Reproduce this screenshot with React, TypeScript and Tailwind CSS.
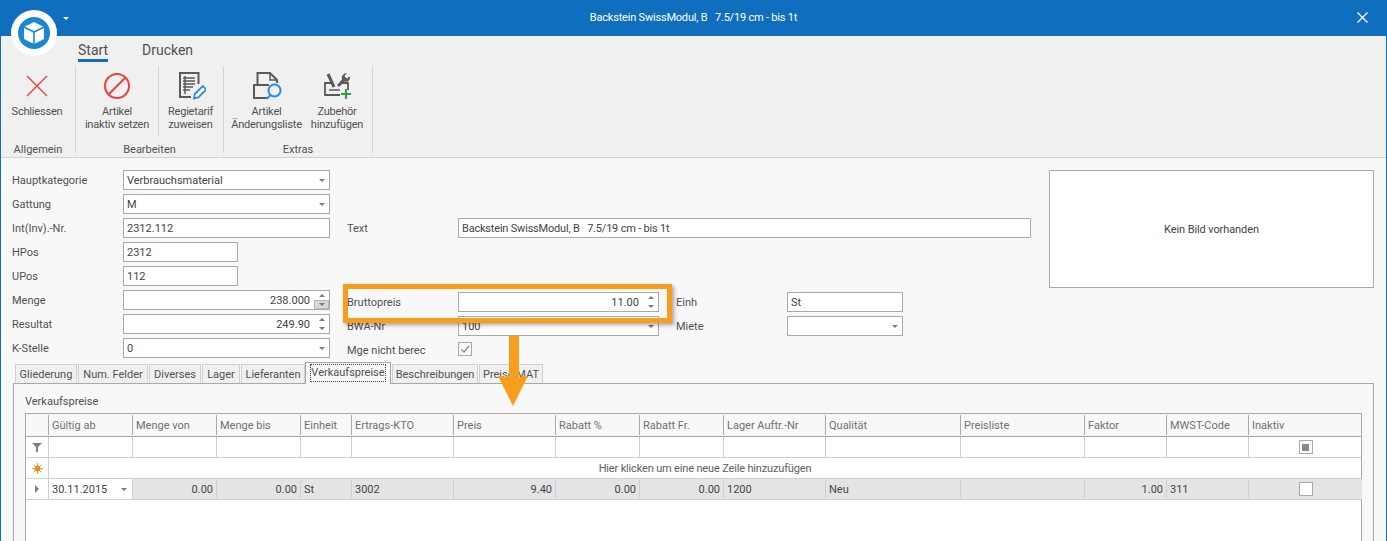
const font = { fontFamily: 'Roboto, "Liberation Sans", Arial, sans-serif' }

function Caret({ className }: { className?: string }) {
  return <div className={`ml-auto h-0 w-0 border-x-[3px] border-t-[3px] border-x-transparent border-t-[#7a7a7a] ${className ?? 'mr-[4px]'}`} />
}

function Spinner({ active }: { active?: boolean }) {
  return (
    <div className="ml-[4px] flex h-[18px] w-[15px] flex-col items-center">
      <div className="flex h-[9px] w-full items-center justify-center">
        <div className="h-0 w-0 border-x-[3px] border-b-[3px] border-x-transparent border-b-[#7a7a7a]" />
      </div>
      <div className={`flex h-[9px] w-full items-center justify-center ${active ? 'border border-[#b8b8b8] bg-[#d8d8d8]' : ''}`}>
        <div className="h-0 w-0 border-x-[3px] border-t-[3px] border-x-transparent border-t-[#7a7a7a]" />
      </div>
    </div>
  )
}

function Field({ value, kind, active, className }: { value?: string; kind?: 'combo' | 'spin'; active?: boolean; className?: string }) {
  return (
    <div className={`flex h-5 items-center border border-[#a9a9a9] bg-white pl-[3px] text-[11px] text-[#444] ${className ?? ''}`}>
      <span className={`mt-[2px] ${kind === 'spin' ? 'ml-auto' : ''}`}>{value}</span>
      {kind === 'combo' && <Caret />}
      {kind === 'spin' && <Spinner active={active} />}
    </div>
  )
}

function Label({ children, className }: { children: string; className?: string }) {
  return <div className={`flex h-5 items-center pt-[2px] text-[11px] text-[#505050] ${className ?? ''}`}>{children}</div>
}

function RibbonButton({ icon, lines, width }: { icon: React.ReactNode; lines: string[]; width: string }) {
  return (
    <div className={`flex flex-col items-center ${width}`}>
      <div className="mt-[5px] flex h-[30px] w-[30px] items-center justify-center">{icon}</div>
      <div className="mt-[4px] text-center text-[11px] leading-[13px] tracking-[-0.2px] whitespace-nowrap text-[#505050]">
        {lines.map(l => <div key={l}>{l}</div>)}
      </div>
    </div>
  )
}

function RibbonGroup({ title, width, children }: { title: string; width: string; children: React.ReactNode }) {
  return (
    <div className={`flex h-[87px] shrink-0 flex-col border-r border-[#d4d4d4] ${width}`}>
      <div className="flex h-[72px] shrink-0">{children}</div>
      <div className="mt-[5px] text-center text-[11px] leading-[13px] text-[#505050]">{title}</div>
    </div>
  )
}

const tabs = [
  { title: 'Gliederung', width: 'w-[62px]' },
  { title: 'Num. Felder', width: 'w-[70px]' },
  { title: 'Diverses', width: 'w-[52px]' },
  { title: 'Lager', width: 'w-[38px]' },
  { title: 'Lieferanten', width: 'w-[64px]' },
]

const columns = [
  { title: 'Gültig ab', value: '30.11.2015' },
  { title: 'Menge von', value: '0.00', right: true },
  { title: 'Menge bis', value: '0.00', right: true },
  { title: 'Einheit', value: 'St' },
  { title: 'Ertrags-KTO', value: '3002' },
  { title: 'Preis', value: '9.40', right: true },
  { title: 'Rabatt %', value: '0.00', right: true },
  { title: 'Rabatt Fr.', value: '0.00', right: true },
  { title: 'Lager Auftr.-Nr', value: '1200' },
  { title: 'Qualität', value: 'Neu' },
  { title: 'Preisliste', value: '' },
  { title: 'Faktor', value: '1.00', right: true },
  { title: 'MWST-Code', value: '311' },
  { title: 'Inaktiv', value: '' },
]

const gridCols = 'grid grid-cols-[22px_84px_84px_84px_51px_102px_102px_84px_84px_102px_135px_124px_82px_82px_114px]'

export default function App() {
  return (
    <div className="relative h-[541px] w-[1387px] overflow-hidden border-x border-[#106ebe] bg-[#f8f8f8]" style={font}>
      {/* title bar */}
      <div className="flex h-9 items-center justify-center bg-[#106ebe] text-[11px] text-white">
        <span className="tracking-[-0.2px] whitespace-pre">Backstein SwissModul, B   7.5/19 cm - bis 1t</span>
      </div>
      <svg className="absolute top-[12px] right-[18px]" width="11" height="11" viewBox="0 0 11 11">
        <path d="M.5.5l10 10M10.5.5l-10 10" stroke="#fff" strokeWidth="1.2" />
      </svg>

      {/* round app button */}
      <div className="absolute top-[10px] left-[10px] flex h-[46px] w-[46px] items-center justify-center rounded-full bg-white">
        <svg width="32" height="32" viewBox="0 0 32 32">
          <circle cx="16" cy="16" r="16" fill="#1b87d3" />
          <path d="M16 5l10 5v12l-10 5-10-5V10z" fill="#fff" />
          <path d="M6 10l10 5 10-5M16 15v12" fill="none" stroke="#1b87d3" strokeWidth="1.600" />
        </svg>
      </div>
      <div className="absolute top-[17px] left-[62px] h-0 w-0 border-x-[3px] border-t-[3px] border-x-transparent border-t-white" />

      {/* ribbon */}
      <div className="h-[122px] border-b border-[#d2d2d2] bg-[#f0f0f0]">
        <div className="flex h-[26px] items-end pl-[77px] text-[14px] text-[#505050]">
          <div className="w-[30px] border-b-[3px] border-[#106ebe] pb-[1px] text-center leading-[16px]">Start</div>
          <div className="ml-[34px] pb-[4px] leading-[16px]">Drucken</div>
        </div>
        <div className="mt-[4px] flex">
          <RibbonGroup title="Allgemein" width="w-[75px]">
            <RibbonButton width="w-[72px]" lines={['Schliessen']} icon={
              <svg width="22" height="22" viewBox="0 0 22 22"><path d="M1 1l20 20M21 1L1 21" stroke="#e8403f" strokeWidth="1.4" /></svg>
            } />
          </RibbonGroup>
          <RibbonGroup title="Bearbeiten" width="w-[148px]">
            <div className="flex h-[70px] w-[83px] justify-center border-r border-[#d4d4d4]">
              <RibbonButton width="w-[82px]" lines={['Artikel', 'inaktiv setzen']} icon={
                <svg width="28" height="28" viewBox="0 0 28 28">
                  <circle cx="14" cy="14" r="12" fill="none" stroke="#e8403f" strokeWidth="2" />
                  <path d="M22.500 5.500L5.500 22.500" stroke="#e8403f" strokeWidth="2" />
                </svg>
              } />
            </div>
            <RibbonButton width="w-[63px]" lines={['Regietarif', 'zuweisen']} icon={
              <svg width="30" height="30" viewBox="0 0 30 30">
                <path d="M22.500 13V2H4v24h11" fill="none" stroke="#5a5a5a" strokeWidth="2" />
                <path d="M9 5v18" stroke="#5a5a5a" strokeWidth="1.500" />
                <path d="M7 7h12M7 10h12M7 13h12M7 16h10M7 19h7" stroke="#5a5a5a" strokeWidth="1.300" />
                <path d="M18 27.500l.8-4.500 8-8 3.500 3.500-8 8z" fill="#fff" stroke="#2b8fd6" strokeWidth="1.800" />
              </svg>
            } />
          </RibbonGroup>
          <RibbonGroup title="Extras" width="w-[149px]">
            <RibbonButton width="w-[85px]" lines={['Artikel', 'Änderungsliste']} icon={
              <svg width="30" height="30" viewBox="0 0 30 30">
                <path d="M5.500 13V2H18l7 7v3" fill="none" stroke="#5a5a5a" strokeWidth="2" />
                <path d="M18 2v7h7" fill="none" stroke="#5a5a5a" strokeWidth="1.500" />
                <path d="M15 27H2V14h15" fill="none" stroke="#5a5a5a" strokeWidth="2" />
                <circle cx="22.500" cy="19.500" r="6" fill="#f0f0f0" stroke="#2b8fd6" strokeWidth="2" />
                <path d="M18.500 24l-4 4" stroke="#2b8fd6" strokeWidth="2" />
              </svg>
            } />
            <RibbonButton width="w-[56px]" lines={['Zubehör', 'hinzufügen']} icon={
              <svg width="30" height="30" viewBox="0 0 30 30">
                <path d="M6 3l6 13" fill="none" stroke="#5a5a5a" strokeWidth="3" />
                <path d="M25 2l-2.500 3 2 2.500 3.500-2c.5 4-2.500 6-5.500 5L17 16l-2-2 5-5.500c-1-3.500 1.500-6.500 5-6.500z" fill="#5a5a5a" />
                <path d="M3 11v13h15M3 12h6M19 12h7v7" fill="none" stroke="#5a5a5a" strokeWidth="1.800" />
                <path d="M7 19h11" stroke="#5a5a5a" strokeWidth="1.500" />
                <path d="M24 18v10M19 23h10" stroke="#2f9e44" strokeWidth="2.200" />
              </svg>
            } />
          </RibbonGroup>
        </div>
      </div>

      {/* form */}
      <div className="mt-[12px] grid grid-cols-[111px_207px_17px_111px_201px_17px_111px_116px_128px_18px_325px] grid-rows-[repeat(8,20px)] gap-y-1 pl-[11px]">
        <Label className="col-start-1 row-start-1">Hauptkategorie</Label>
        <Field className="col-start-2 row-start-1" value="Verbrauchsmaterial" kind="combo" />
        <Label className="col-start-1 row-start-2">Gattung</Label>
        <Field className="col-start-2 row-start-2" value="M" kind="combo" />
        <Label className="col-start-1 row-start-3">Int(Inv).-Nr.</Label>
        <Field className="col-start-2 row-start-3" value="2312.112" />
        <Label className="col-start-4 row-start-3">Text</Label>
        <Field className="col-span-5 col-start-5 row-start-3 tracking-[-0.2px] whitespace-pre" value="Backstein SwissModul, B   7.5/19 cm - bis 1t" />
        <Label className="col-start-1 row-start-4">HPos</Label>
        <Field className="col-start-2 row-start-4 w-[115px]" value="2312" />
        <Label className="col-start-1 row-start-5">UPos</Label>
        <Field className="col-start-2 row-start-5 w-[115px]" value="112" />
        <Label className="col-start-1 row-start-6">Menge</Label>
        <Field className="col-start-2 row-start-6" value="238.000" kind="spin" active />
        <Label className="col-start-4 row-start-6 mt-[2px]">Bruttopreis</Label>
        <Field className="col-start-5 row-start-6 mt-[2px]" value="11.00" kind="spin" />
        <Label className="col-start-7 row-start-6 mt-[2px]">Einh</Label>
        <Field className="col-start-8 row-start-6 mt-[2px]" value="St" />
        <Label className="col-start-1 row-start-7">Resultat</Label>
        <Field className="col-start-2 row-start-7" value="249.90" kind="spin" />
        <Label className="col-start-4 row-start-7 mt-[2px]">BWA-Nr</Label>
        <Field className="col-start-5 row-start-7 mt-[2px]" value="100" kind="combo" />
        <Label className="col-start-7 row-start-7 mt-[2px]">Miete</Label>
        <Field className="col-start-8 row-start-7 mt-[2px]" kind="combo" />
        <Label className="col-start-1 row-start-8">K-Stelle</Label>
        <Field className="col-start-2 row-start-8" value="0" kind="combo" />
        <Label className="col-start-4 row-start-8 mt-[2px]">Mge nicht berec</Label>
        <div className="col-start-5 row-start-8 mt-[2px] flex h-[14px] w-[14px] items-center justify-center self-center border border-[#a9a9a9]">
          <svg width="10" height="10" viewBox="0 0 10 10"><path d="M1.500 5.500l2.500 2.500 5-6" fill="none" stroke="#8a8a8a" strokeWidth="1.200" /></svg>
        </div>
        <div className="col-start-11 row-span-5 row-start-1 flex h-[118px] items-center justify-center border border-[#a9a9a9] bg-white pt-[2px] text-[11px] tracking-[-0.1px] text-[#444]">
          Kein Bild vorhanden
        </div>
      </div>

      {/* tabs */}
      <div className="relative z-10 mt-[4px] flex h-[21px] items-end gap-px pl-[14px] text-[11px] text-[#505050]">
        {tabs.map(t => (
          <div key={t.title} className={`flex h-[19px] items-center justify-center border border-b-0 border-[#d0d0d0] bg-[#f0f0f0] pt-[2px] ${t.width}`}>{t.title}</div>
        ))}
        <div className="-mb-px -ml-px flex h-[22px] w-[86px] items-center justify-center border border-b-0 border-[#a9a9a9] bg-[#f8f8f8] pb-[1px]">
          <span className="outline-1 outline-[#444] outline-dotted">Verkaufspreise</span>
        </div>
        <div className="flex h-[19px] w-[86px] items-center justify-center border border-b-0 border-[#d0d0d0] bg-[#f0f0f0] pt-[2px]">Beschreibungen</div>
        <div className="flex h-[19px] w-[64px] items-center justify-center border border-b-0 border-[#d0d0d0] bg-[#f0f0f0] pt-[2px]">Preise MAT</div>
      </div>
      <div className="ml-[12px] h-[200px] w-[1361px] border border-[#a9a9a9] px-[11px]">
        <div className="h-[29px] pt-[11px] text-[11px] leading-[13px] text-[#505050]">Verkaufspreise</div>
        <div className="h-[200px] border border-[#a9a9a9] bg-white text-[11px] text-[#444]">
          {/* header */}
          <div className={`${gridCols} h-[23px] border-b border-[#a9a9a9] bg-[#f8f8f8] text-[#707070]`}>
            <div />
            {columns.map(c => (
              <div key={c.title} className="my-[1px] flex items-center border-l border-[#a9a9a9] pt-[2px] pl-[3px]">{c.title}</div>
            ))}
          </div>
          {/* filter row */}
          <div className={`${gridCols} h-[21px] border-b border-[#d0d0d0]`}>
            <div className="flex items-center justify-center">
              <svg width="10" height="9" viewBox="0 0 10 9"><path d="M0 0h10L6 4v5H4V4z" fill="#7f7f7f" /></svg>
            </div>
            {columns.map((c, i) => (
              <div key={c.title} className="flex items-center justify-center border-l border-[#d0d0d0]">
                {i === 13 && (
                  <div className="flex h-[14px] w-[14px] items-center justify-center border border-[#a9a9a9]">
                    <div className="h-[7px] w-[7px] bg-[#8a8a8a]" />
                  </div>
                )}
              </div>
            ))}
          </div>
          {/* new row */}
          <div className="grid h-[21px] grid-cols-[22px_1fr] border-b border-[#d0d0d0]">
            <div className="flex items-center justify-center">
              <svg width="11" height="11" viewBox="0 0 11 11">
                <path d="M5.500 0v11M0 5.500h11M1.500 1.500l8 8M9.500 1.500l-8 8" stroke="#f5a04a" strokeWidth="1" />
                <circle cx="5.500" cy="5.500" r="3" fill="#f08a24" />
              </svg>
            </div>
            <div className="flex items-center justify-center border-l border-[#d0d0d0] pt-[2px] tracking-[-0.16px] text-[#606060]">Hier klicken um eine neue Zeile hinzuzufügen</div>
          </div>
          {/* data row */}
          <div className={`${gridCols} h-[21px] border-b border-[#d0d0d0]`}>
            <div className="flex items-center justify-center">
              <div className="h-0 w-0 border-y-[4px] border-l-[4px] border-y-transparent border-l-[#7f7f7f]" />
            </div>
            {columns.map((c, i) => (
              <div key={c.title} className={`flex items-center border-l border-[#d0d0d0] pl-[3px] ${i === 0 ? 'bg-white pr-[1px]' : 'bg-[#e4e4e4] pr-[3px]'} ${c.right ? 'justify-end' : ''} ${i === 13 ? 'justify-center' : ''}`}>
                <span className="mt-[2px]">{c.value}</span>
                {i === 0 && <Caret />}
                {i === 13 && <div className="h-[14px] w-[14px] border border-[#a9a9a9] bg-white" />}
              </div>
            ))}
          </div>
        </div>
      </div>

      {/* annotation */}
      <div className="pointer-events-none absolute top-[284px] left-[342px] z-20 h-[39px] w-[329px] border-[5px] border-[#f99d1c] shadow-[2px_2px_4px_rgba(0,0,0,0.35)]" />
      <svg className="pointer-events-none absolute top-[335px] left-[497px] z-20" width="32" height="73" viewBox="0 0 32 73">
        <path d="M11 1h10v41l9-1-15 30L0 41l11 1z" fill="#f99d1c" />
      </svg>
    </div>
  )
}
